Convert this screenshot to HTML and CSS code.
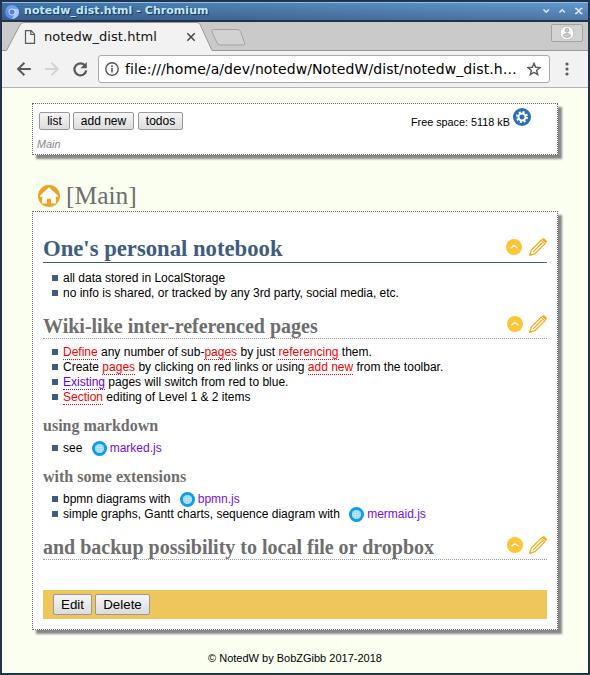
FILE: index.html
```html
<!DOCTYPE html>
<html lang="en">
<head>
<meta charset="utf-8">
<title>notedw_dist.html</title>
<link rel="stylesheet" href="styles.css">
</head>
<body>
<svg class="defs" width="0" height="0" aria-hidden="true">
  <symbol id="up" viewBox="0 0 16 16"><circle cx="8" cy="8" r="8" fill="#ffc534"/><path d="M4.300 9.300 8 6.600l3.700 2.700" fill="none" stroke="#fff" stroke-width="1.300"/></symbol>
  <symbol id="pencil" viewBox="0 0 18 18"><g fill="none" stroke="#fda90e" stroke-width="1.200"><path d="M.9 17.100 2.300 12 12.200 2.100l3.700 3.700L6 15.700z"/><path d="M4.200 13.800 13.500 4.500"/></g><path d="m12.200 2.100 1.500-1.500q.9-.8 1.800 0l1.900 1.900q.9.900 0 1.800l-1.500 1.500z" fill="#fda90e"/><path d="m12.600 1.700 3.700 3.700" stroke="#fff" stroke-width=".8"/><path d="m.2 17.800.8-2.900L3.100 17z" fill="#fda90e"/></symbol>
  <symbol id="globe" viewBox="0 0 15 15"><circle cx="7.500" cy="7.500" r="7.500" fill="#0b9df0"/><circle cx="7.500" cy="7.500" r="4.600" fill="#c5e8fb"/><path d="M3 7.500h9M3.700 5.200h7.600M3.700 9.800h7.600M7.500 3v9M5.300 3.500q-1.300 4 0 8M9.700 3.500q1.300 4 0 8" fill="none" stroke="#8bd0f7" stroke-width=".5"/></symbol>
</svg>
<div class="window">
  <header class="titlebar">
    <svg class="logo" viewBox="0 0 14 14"><circle cx="7" cy="7" r="7" fill="#5b8def"/><path d="M7 4h6.300A7 7 0 0 1 7 14l2.700-5.500z" fill="#a9c8fb"/><path d="M1.200 3.200A7 7 0 0 1 13.200 4H7L4.400 8.500z" fill="#6f9ff4"/><circle cx="7" cy="7" r="3.400" fill="#cfe0ff"/><circle cx="7" cy="7" r="2.500" fill="#4a80ea"/></svg>
    <span class="caption">notedw_dist.html - Chromium</span>
    <svg class="controls" width="44" height="8" viewBox="0 0 44 8"><g fill="none" stroke="#dbe9f5" stroke-width="1.600"><path d="m2.500 2.500 2.700 2.700 2.700-2.700M18.500 5.500l2.700-2.700 2.700 2.700M34 1.500h1.400l4.700 5h1.400M34 6.500h1.400l4.700-5h1.400"/></g></svg>
  </header>
  <div class="tabs">
    <svg class="tabshape" width="586" height="29" viewBox="0 0 586 29"><path d="M0 28.500h4.500L18 3q1.200-2.500 4-2.500h173q2.200 0 3.200 2.300L210 28.500h376V30H0z" fill="#f2f2f2"/><path d="M0 28.500h4.500L18 3q1.200-2.500 4-2.500h173q2.200 0 3.200 2.300L210 28.500h376" fill="none" stroke="#999"/><path d="M211.500 7.500h24q2 0 3 2l4 11q1 2.500-1 2.500h-23q-2.500 0-3.500-2l-5-11q-1-2.500 1.500-2.500z" fill="#d2d2d2" stroke="#a3a3a3"/></svg>
    <svg class="file" width="12" height="14" viewBox="0 0 12 14"><path d="M1.500.7h5.600l3.400 3.500v9.100h-9zM6.800.7v3.800h3.700" fill="none" stroke="#585858" stroke-width="1.200"/></svg>
    <span class="tabtitle">notedw_dist.html</span>
    <svg class="close" width="10" height="10" viewBox="0 0 10 10"><path d="m1.300 1.300 7.400 7.400m0-7.400L1.300 8.700" stroke="#444" stroke-width="1.500"/></svg>
    <span class="profile"><svg width="14" height="14" viewBox="0 0 14 14"><circle cx="7" cy="7" r="6.800" fill="#fff" stroke="#a8a8a8" stroke-width=".6"/><circle cx="7" cy="4.200" r="2" fill="#ccc" stroke="#999" stroke-width=".7"/><path d="M3 9.300q4-3.600 8 0-.4 1.900-4 2.200-3.600-.3-4-2.200z" fill="#ccc" stroke="#999" stroke-width=".7"/></svg></span>
  </div>
  <div class="toolbar">
    <svg class="nav" width="80" height="18" viewBox="0 0 80 18"><g fill="none" stroke-width="2"><path d="M14.800 9H2.300M8.400 2.700 2.100 9l6.300 6.300" stroke="#5a5a5a"/><path d="M29 9h12.500M35.400 2.700 41.700 9l-6.300 6.300" stroke="#d3d3d3"/><path d="M69.300 5.800A6 6 0 1 0 70.300 10.500" stroke="#5a5a5a" stroke-width="2.200"/></g><path d="M70.800 1.900v6.300h-6.300z" fill="#5a5a5a"/></svg>
    <div class="address">
      <svg width="14" height="14" viewBox="0 0 14 14"><circle cx="7" cy="7" r="6.200" fill="none" stroke="#555" stroke-width="1.400"/><path d="M7 6v4.500M7 3.200v1.700" stroke="#555" stroke-width="1.600"/></svg>
      <span class="url">file:///home/a/dev/notedw/NotedW/dist/notedw_dist.h…</span>
      <svg class="star" width="14" height="14" viewBox="0 0 14 14"><path d="m7 1.300 1.600 4 4.400.3-3.400 2.800 1.100 4.200L7 10.300l-3.700 2.300 1.100-4.200L1 5.600l4.400-.3z" fill="none" stroke="#5a5a5a" stroke-width="1.400"/></svg>
    </div>
    <svg class="more" width="4" height="14" viewBox="0 0 4 14"><g fill="#5a5a5a"><circle cx="2" cy="2" r="1.600"/><circle cx="2" cy="7" r="1.600"/><circle cx="2" cy="12" r="1.600"/></g></svg>
  </div>
  <main class="page">
    <section class="box menu">
      <div class="menurow">
        <button class="b-list">list</button><button class="b-add">add new</button><button class="b-todos">todos</button>
        <span class="space">Free space: 5118 kB</span>
        <svg class="gear" width="18" height="18" viewBox="0 0 18 18"><circle cx="9" cy="9" r="9" fill="#2a6fba"/><circle cx="9" cy="9" r="4.900" fill="none" stroke="#fff" stroke-width="2.200" stroke-dasharray="1.925 1.924"/><circle cx="9" cy="9" r="3.500" fill="none" stroke="#fff" stroke-width="2"/></svg>
      </div>
      <div class="crumb">Main</div>
    </section>
    <div class="pagetitle">
      <svg width="22" height="22" viewBox="0 0 22 22"><circle cx="11" cy="11" r="11" fill="#eea323"/><path d="m11 2.300 9.300 8.700-1.200 1.200-1.300-1.100V18.500h-4.700v-4.700H8.900v4.700H4.200v-7.400l-1.300 1.100L1.700 11z" fill="#fff"/></svg>
      <span>[Main]</span>
    </div>
    <article class="box note">
      <div class="head h1"><h1>One's personal notebook</h1><svg class="up first"><use href="#up"/></svg><svg class="pencil"><use href="#pencil"/></svg></div>
      <ul class="after1"><li>all data stored in LocalStorage</li><li>no info is shared, or tracked by any 3rd party, social media, etc.</li></ul>
      <div class="head h2"><h2>Wiki-like inter-referenced pages</h2><svg class="up"><use href="#up"/></svg><svg class="pencil"><use href="#pencil"/></svg></div>
      <ul class="after2">
        <li><a class="red">Define</a> any number of sub-<a class="red">pages</a> by just <a class="red">referencing</a> them.</li>
        <li>Create <a class="red">pages</a> by clicking on red links or using <a class="red">add new</a> from the toolbar.</li>
        <li><a class="known">Existing</a> pages will switch from red to blue.</li>
        <li><a class="red">Section</a> editing of Level 1 &amp; 2 items</li>
      </ul>
      <h3>using markdown</h3>
      <ul class="after3"><li>see <svg class="globe"><use href="#globe"/></svg><a class="ext">marked.js</a></li></ul>
      <h3>with some extensions</h3>
      <ul class="after3"><li>bpmn diagrams with <svg class="globe"><use href="#globe"/></svg><a class="ext">bpmn.js</a></li><li>simple graphs, Gantt charts, sequence diagram with <svg class="globe"><use href="#globe"/></svg><a class="ext">mermaid.js</a></li></ul>
      <div class="head h2 last"><h2>and backup possibility to local file or dropbox</h2><svg class="up"><use href="#up"/></svg><svg class="pencil"><use href="#pencil"/></svg></div>
      <div class="actions"><button class="b-edit">Edit</button><button class="b-del">Delete</button></div>
    </article>
    <footer>© NotedW by BobZGibb 2017-2018</footer>
  </main>
</div>
</body>
</html>
```
FILE: styles.css
```css
* { box-sizing: border-box; }
body { margin: 0; font-family: "Liberation Sans", sans-serif; font-size: 12px; color: #000; }
svg { display: block; flex: none; }
.defs { position: absolute; }
.window { width: 590px; height: 675px; border: 2px solid #223448; display: flex; flex-direction: column; background: #fbfff0; overflow: hidden; }
.titlebar { height: 20px; flex: none; display: flex; align-items: center; padding: 0 3px 1px; border-top: 1px solid #83c3f5; border-bottom: 2px solid #20344b; background: linear-gradient(rgba(25,40,70,0), rgba(25,40,70,.3)), linear-gradient(90deg, #4572a4, #6498cc); }
.logo { width: 14px; height: 14px; margin-top: 1px; }
.caption { flex: 1; margin-left: 5px; font: bold 11px/16px "DejaVu Sans", sans-serif; letter-spacing: .05px; color: #bce8fa; text-shadow: 1px 1px 1px #1c3350; white-space: nowrap; }
.tabs { height: 29px; flex: none; display: flex; align-items: center; background: #cacaca; position: relative; }
.tabshape { position: absolute; left: 0; top: 0; }
.file, .tabtitle, .close, .profile { position: relative; }
.file { margin-left: 22px; }
.tabtitle { margin-left: 8px; width: 141px; font: 13px/18px "DejaVu Sans", sans-serif; letter-spacing: .05px; color: #111; }
.close { margin-left: 1px; }
.profile { margin: -8px 5px 0 auto; width: 32px; height: 18px; border: 1px solid #a3a3a3; border-radius: 2px; background: #d3d3d3; display: flex; align-items: center; justify-content: center; }
.toolbar { height: 37px; flex: none; display: flex; align-items: center; background: #f2f2f2; border-bottom: 1px solid #b4b4b4; padding-left: 14px; }
.address { width: 452px; height: 28px; margin-left: 2px; display: flex; align-items: center; background: #fff; border: 1px solid #a8a8a8; border-radius: 3px; padding: 0 8px 0 6px; }
.nav { width: 80px; }
.url { margin-left: 6px; flex: 1; font: 14px/20px "DejaVu Sans", sans-serif; letter-spacing: .08px; white-space: nowrap; }
.more { margin-left: 15px; }
.page { flex: 1; padding: 15px 30px 0; }
.box { width: 526px; border: 1px dotted #666; background: #fff; box-shadow: 4px 4px 2px #888; }
.menu { height: 52px; padding: 4px 0 0 4px; }
.menurow { display: flex; height: 26px; padding: 4px 0 0 2px; }
button { font-family: "Liberation Sans", sans-serif; color: #000; padding: 0; border: 1px solid #999; border-radius: 2px; background: linear-gradient(#f6f6f6, #dcdcdc); height: 18px; font-size: 12px; line-height: 17px; }
.b-list { width: 31px; }
.b-add { width: 61px; margin-left: 3px; }
.b-todos { width: 45px; margin-left: 4px; }
.space { margin-left: 228px; width: 98px; font-size: 10.8px; line-height: 13px; padding-top: 4px; white-space: nowrap; }
.gear { margin: -4px 0 0 4px; }
.crumb { font-style: italic; font-size: 10.8px; line-height: 13px; color: #888; margin-top: 4px; }
.pagetitle { height: 56px; padding: 30px 0 0 6px; display: flex; color: #6e6e6e; font: 25.5px/22px "Liberation Serif", serif; }
.pagetitle span { margin-left: 6px; }
.note { height: 419px; padding: 22px 10px 0; }
.head { display: flex; }
.head.h1 { height: 29px; border-bottom: 1px solid #3f5d80; }
.head.h2 { height: 25px; border-bottom: 1px dotted #999; margin-top: 13px; }
h1, h2, h3 { margin: 0; font-family: "Liberation Serif", serif; font-weight: bold; color: #6e6e6e; white-space: nowrap; }
h1 { flex: 1; font-size: 22.7px; line-height: 30px; color: #3f5d80; }
h2 { flex: 1; font-size: 20px; line-height: 24px; }
h3 { font-size: 16px; line-height: 20px; height: 20px; margin-top: 11px; }
.up { width: 16px; height: 16px; margin: 2px 6px 0 0; }
.h1 .up { margin: 5px 7px 0 0; }
.pencil { width: 18px; height: 18px; margin-top: 1px; }
.h1 .pencil { margin-top: 4px; }
ul { list-style: none; margin: 0; padding: 0; }
.after1 { padding-top: 8px; }
.after2 { padding-top: 6px; }
.after3 { padding-top: 5px; }
li { height: 15px; line-height: 15px; display: flex; padding-left: 9px; white-space: pre; }
li::before { content: ""; width: 6px; height: 6px; margin: 4px 5px 0 0; background: #3f5d80; }
li a { height: 15px; }
.red { color: #f00; border-bottom: 1px dotted #f00; }
.known { color: #60f; border-bottom: 1px dotted #60f; }
.ext { color: #7010f0; }
.globe { width: 15px; height: 15px; margin: 0 3px 0 6px; }
.head.last { margin-top: 13px; }
.actions { height: 29px; margin-top: 30px; background: #efc65b; padding: 4px 10px; display: flex; gap: 3px; }
.actions button { height: 21px; font-size: 13.33px; line-height: 18px; }
.b-edit { width: 39px; }
.b-del { width: 55px; }
footer { margin-top: 22px; text-align: center; font-size: 11px; line-height: 13px; }
```
